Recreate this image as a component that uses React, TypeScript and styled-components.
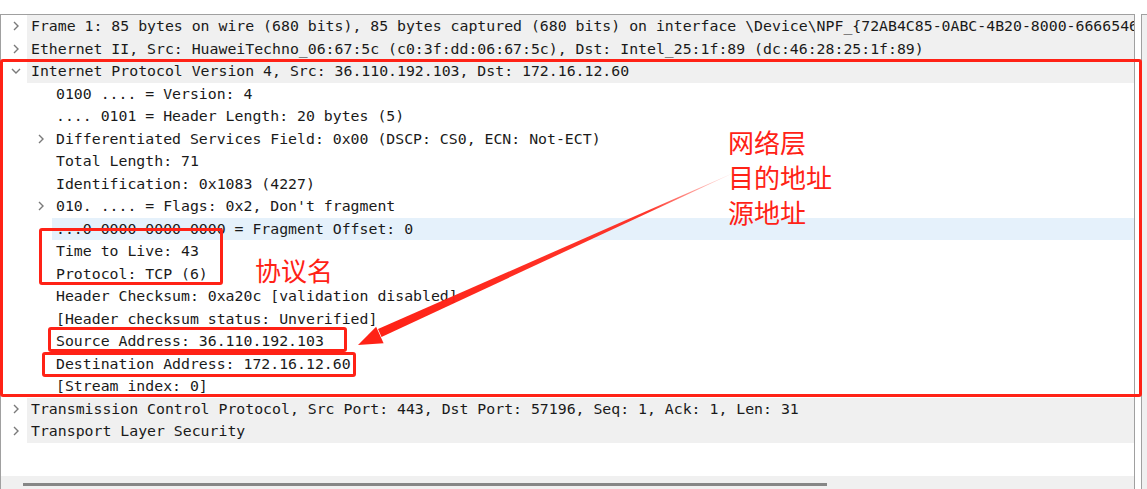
import styled, { createGlobalStyle } from "styled-components";

const GlobalStyle = createGlobalStyle`
  html, body { margin: 0; padding: 0; background: #fff; }
  * { box-sizing: border-box; }
`

const RED = "#ff2216";

const Page = styled.div`
  position: relative;
  width: 1147px;
  height: 489px;
  overflow: hidden;
  background: #fff;
  display: flex;
  flex-direction: column;
`

const TopStrip = styled.div`
  height: 14px;
  flex: none;
`

const Body = styled.div`
  flex: 1;
  display: flex;
  gap: 6px;
  min-height: 0;
`

const TreePanel = styled.div`
  width: 1135px;
  flex: none;
  border: 1px solid #a0a0a0;
  border-bottom: none;
  display: flex;
  flex-direction: column;
`

const Rows = styled.div`
  flex: 1;
  font-family: "DejaVu Sans Mono", "Liberation Mono", monospace;
  font-size: 14.84px;
  color: #1a1a1a;
`

const Row = styled.div<{ $depth: number }>`
  display: flex;
  height: 22.5px;
  padding-left: ${p => p.$depth * 25}px;
`

const Toggle = styled.span`
  width: 26px;
  flex: none;
  display: flex;
  align-items: center;
  padding-left: 10px;
`

const Label = styled.span<{ $tone: "plain" | "top" | "sel" }>`
  flex: 1;
  min-width: 0;
  padding-left: 4px;
  line-height: 22.5px;
  white-space: pre;
  overflow: hidden;
  background: ${p => (p.$tone === "top" ? "#f0f0f0" : p.$tone === "sel" ? "#e5f1fb" : "transparent")};
`

const HScroll = styled.div`
  height: 13px;
  flex: none;
  background: #f0f0f0;
  padding: 7px 0 0 22px;
`

const Thumb = styled.div`
  width: 804px;
  height: 3px;
  background: #868686;
`

const VScroll = styled.div`
  flex: 1;
  background: #f0f0f0;
  border-left: 1px solid #a0a0a0;
  border-top: 1px solid #a0a0a0;
`

const Mark = styled.div<{ $x: number; $y: number; $w: number; $h: number }>`
  position: absolute;
  left: ${p => p.$x}px;
  top: ${p => p.$y}px;
  width: ${p => p.$w}px;
  height: ${p => p.$h}px;
  border: 3px solid ${RED};
  border-radius: 3px;
  pointer-events: none;
`

const Note = styled.div<{ $x: number; $y: number }>`
  position: absolute;
  left: ${p => p.$x}px;
  top: ${p => p.$y}px;
  font-family: "Noto Sans CJK SC", "Noto Sans", sans-serif;
  font-size: 26px;
  line-height: 35px;
  color: ${RED};
  white-space: pre;
`

const Overlay = styled.svg`
  position: absolute;
  left: 0;
  top: 0;
  pointer-events: none;
`

type Item = { d: number; c?: "open" | "closed"; t: string; sel?: boolean };

const items: Item[] = [
  { d: 0, c: "closed", t: "Frame 1: 85 bytes on wire (680 bits), 85 bytes captured (680 bits) on interface \\Device\\NPF_{72AB4C85-0ABC-4B20-8000-66665460}, id 0" },
  { d: 0, c: "closed", t: "Ethernet II, Src: HuaweiTechno_06:67:5c (c0:3f:dd:06:67:5c), Dst: Intel_25:1f:89 (dc:46:28:25:1f:89)" },
  { d: 0, c: "open", t: "Internet Protocol Version 4, Src: 36.110.192.103, Dst: 172.16.12.60" },
  { d: 1, t: "0100 .... = Version: 4" },
  { d: 1, t: ".... 0101 = Header Length: 20 bytes (5)" },
  { d: 1, c: "closed", t: "Differentiated Services Field: 0x00 (DSCP: CS0, ECN: Not-ECT)" },
  { d: 1, t: "Total Length: 71" },
  { d: 1, t: "Identification: 0x1083 (4227)" },
  { d: 1, c: "closed", t: "010. .... = Flags: 0x2, Don't fragment" },
  { d: 1, t: "...0 0000 0000 0000 = Fragment Offset: 0", sel: true },
  { d: 1, t: "Time to Live: 43" },
  { d: 1, t: "Protocol: TCP (6)" },
  { d: 1, t: "Header Checksum: 0xa20c [validation disabled]" },
  { d: 1, t: "[Header checksum status: Unverified]" },
  { d: 1, t: "Source Address: 36.110.192.103" },
  { d: 1, t: "Destination Address: 172.16.12.60" },
  { d: 1, t: "[Stream index: 0]" },
  { d: 0, c: "closed", t: "Transmission Control Protocol, Src Port: 443, Dst Port: 57196, Seq: 1, Ack: 1, Len: 31" },
  { d: 0, c: "closed", t: "Transport Layer Security" },
];

function Chevron({ open }: { open: boolean }) {
  return (
    <svg width="10" height="10" viewBox="0 0 10 10">
      <path
        d={open ? "M1 3 L5 7 L9 3" : "M3 1 L7 5 L3 9"}
        fill="none"
        stroke="#7a7a7a"
        strokeWidth="1.4"
      />
    </svg>
  );
}

export default function App() {
  return (<>
    <GlobalStyle />
    <Page>
      <TopStrip />
      <Body>
        <TreePanel>
          <Rows>
            {items.map((it, i) => (
              <Row key={i} $depth={it.d}>
                <Toggle>{it.c && <Chevron open={it.c === "open"} />}</Toggle>
                <Label $tone={it.sel ? "sel" : it.d === 0 ? "top" : "plain"}>{it.t}</Label>
              </Row>
            ))}
          </Rows>
          <HScroll><Thumb /></HScroll>
        </TreePanel>
        <VScroll />
      </Body>

      <Mark $x={0} $y={59} $w={1142} $h={338} />
      <Mark $x={39} $y={228} $w={184} $h={57} />
      <Mark $x={48} $y={327} $w={299} $h={25} />
      <Mark $x={42} $y={352} $w={314} $h={25} />

      <Note $x={728} $y={124}>{"网络层\n目的地址\n源地址"}</Note>
      <Note $x={255} $y={252}>协议名</Note>

      <Overlay width="1147" height="489" viewBox="0 0 1147 489">
        <defs>
          <linearGradient id="fade" x1="740" y1="170" x2="380" y2="335" gradientUnits="userSpaceOnUse">
            <stop offset="0" stopColor={RED} stopOpacity="0" />
            <stop offset="0.25" stopColor={RED} stopOpacity="0.9" />
            <stop offset="1" stopColor={RED} />
          </linearGradient>
        </defs>
        <polygon points="740,170 381.5,337 378,329" fill="url(#fade)" />
        <polygon points="358,345 383.6,343.2 376.1,326.8" fill={RED} />
      </Overlay>
    </Page>
  </>);
}
